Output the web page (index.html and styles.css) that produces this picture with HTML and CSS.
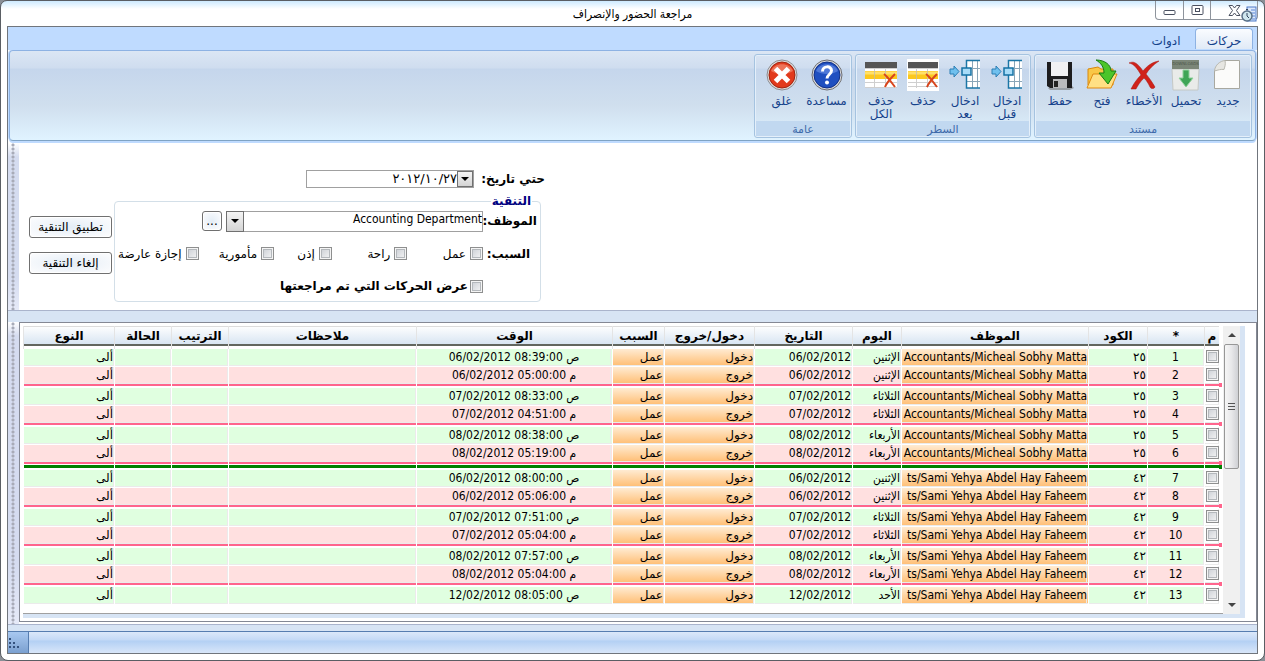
FILE: index.html
```html
<!DOCTYPE html>
<html lang="ar" dir="rtl">
<head>
<meta charset="utf-8">
<title>مراجعة الحضور والإنصراف</title>
<link rel="stylesheet" href="styles.css">
</head>
<body>
<div class="window">
  <header class="titlebar">
    <h1 class="title">مراجعة الحضور والإنصراف</h1>
    <div class="controls">
      <button class="ctl ctl-close" aria-label="إغلاق"><svg width="13" height="11" viewBox="0 0 13 11"><path d="M1 .5h3.500l2 2.500 2-2.500H12L8.500 5.500l3.500 5H8.500l-2-2.500-2 2.500H1l3.500-5z" fill="#fff" stroke="#4a5060"/></svg></button>
      <button class="ctl" aria-label="تكبير"><svg width="13" height="11" viewBox="0 0 13 11"><rect x="1" y=".5" width="11" height="9" rx="1" fill="#fff" stroke="#4a5060"/><rect x="4.500" y="3.500" width="4" height="3" fill="#fff" stroke="#4a5060"/></svg></button>
      <button class="ctl" aria-label="تصغير"><svg width="13" height="11" viewBox="0 0 13 11"><rect x="1" y="5.500" width="11" height="4" rx="1" fill="#fff" stroke="#4a5060"/></svg></button>
    </div>
    <svg class="app-icon" width="16" height="17" viewBox="0 0 16 17"><rect x="6" y="1" width="9" height="14" fill="#dce8fa" stroke="#4a78c8"/><path d="M10 4h4M10 7h4M11 10h3M11 13h3" stroke="#5a88d8"/><circle cx="6" cy="10" r="5" fill="#cfe6ee" stroke="#5a7086" stroke-width="1.500"/><path d="M6 7v3l2 2M5 3.500h2" stroke="#30445c" fill="none"/></svg>
  </header>

  <main class="frame">
    <nav class="tabs">
      <button class="tab active">حركات</button>
      <button class="tab">ادوات</button>
    </nav>
    <div class="ribbon">
      <section class="group">
        <div class="tools">
          <button class="tool"><svg width="32" height="32" viewBox="0 0 32 32"><path d="M13 1.500h14.500v28h-25V12z" fill="#fbfbfa" stroke="#a8a8a0"/><path d="M13 1.500c1 4-.5 7-1 9-3-.5-6 .5-9.500 1.500C3 6 8 2 13 1.500z" fill="#e6e6e2" stroke="#b8b8b0"/></svg><span>جديد</span></button>
          <button class="tool"><svg width="32" height="32" viewBox="0 0 32 32"><path d="M2 10h27l-1 21H3z" fill="#e9ebe9" stroke="#c4c8c4"/><path d="M2 1h27v9H2z" fill="#7b8678"/><text x="15.500" y="6" text-anchor="middle" font-size="4" fill="#4c564a">DOWNLOADS</text><path d="M13 11h6v8h4l-7 9-7-9h4z" fill="#3fa556" stroke="#8fd09b"/></svg><span>تحميل</span></button>
          <button class="tool"><svg width="32" height="32" viewBox="0 0 32 32"><path d="M1 4c4-2 8-1 14 8 4-5 9-9 16-10-6 4-10 8-13 13 4 5 6 8 9 13-1 2-4 2-5 0-2-4-3-6-6-9-4 4-6 7-8 11H3c3-6 6-10 10-14C9 9 6 5 1 4z" fill="#d0221a" stroke="#a8160e" stroke-width=".5"/></svg><span>الأخطاء</span></button>
          <button class="tool"><svg width="32" height="32" viewBox="0 0 32 32"><path d="M2 10l10-2 3 2h12v16H2z" fill="#f9c746" stroke="#d8880c"/><path d="M1 29l6-14h24l-6 14z" fill="#ffe084" stroke="#e08a10"/><path d="M10 1c9 0 15 5 15 11h5l-8 13-9-11h5c0-6-3-10-8-13z" fill="#4cc52a" stroke="#187c12"/></svg><span>فتح</span></button>
          <button class="tool"><svg width="32" height="32" viewBox="0 0 32 32"><path d="M27 26l3 3-4 2H6l-2-2z" fill="#777" opacity=".6"/><path d="M3 3h25v26H6l-3-2z" fill="#1d1d1f"/><path d="M7 3h17v14H7z" fill="#f1f1f3"/><path d="M9 20h14v9H9z" fill="#b9babd"/><path d="M10 22h4v6h-4z" fill="#222"/></svg><span>حفظ</span></button>
        </div>
        <h2 class="group-name">مستند</h2>
      </section>
      <section class="group">
        <div class="tools">
          <button class="tool"><svg width="32" height="32" viewBox="0 0 32 32"><path d="M17 1h14v28H17z" fill="#fff"/><path d="M23.500 1v28M17 9.500h14M17 22.500h14M28.500 1v28" fill="none" stroke="#8aa6b8"/><path d="M31 1.500H17.500V29H31" fill="none" stroke="#1b76a6" stroke-width="1.500"/><rect x="13" y="9" width="9" height="7" fill="#a8dcf8" stroke="#1572a4" stroke-width="1.500"/><path d="M1 10h4V7l5 5.500L5 18v-3H1z" fill="#6fc0ee" stroke="#2c7fb4"/></svg><span>ادخال<br>قبل</span></button>
          <button class="tool"><svg width="32" height="32" viewBox="0 0 32 32"><path d="M17 1h14v28H17z" fill="#fff"/><path d="M23.500 1v28M17 9.500h14M17 22.500h14M28.500 1v28" fill="none" stroke="#8aa6b8"/><path d="M31 1.500H17.500V29H31" fill="none" stroke="#1b76a6" stroke-width="1.500"/><rect x="13" y="9" width="9" height="7" fill="#a8dcf8" stroke="#1572a4" stroke-width="1.500"/><path d="M1 10h4V7l5 5.500L5 18v-3H1z" fill="#6fc0ee" stroke="#2c7fb4"/></svg><span>ادخال<br>بعد</span></button>
          <button class="tool"><svg width="32" height="32" viewBox="0 0 32 32"><path d="M0 0h32v32H0z" fill="#fff"/><path d="M1 3h30v6H1z" fill="#555"/><path d="M1 12h30v8H1z" fill="#fcc81e"/><path d="M1 12.500h30v3H1z" fill="#ffe06a"/><path d="M1 23.500h30M1 27.500h30M9.500 9v20M20.500 9v20M1 9.500h30" stroke="#bbb" opacity=".7"/><path d="M19 15c4 3 7 8 11 13M30 15c-4 4-8 8-10 13" fill="none" stroke="#d8451c" stroke-width="2"/></svg><span>حذف</span></button>
          <button class="tool"><svg width="32" height="32" viewBox="0 0 32 32"><path d="M0 3h32v26H0z" fill="#fff"/><path d="M0 3h32v6H0z" fill="#555"/><path d="M0 12h32v8H0z" fill="#fcc81e"/><path d="M0 12.500h32v3H0z" fill="#ffe06a"/><path d="M0 23.500h32M0 28.500h32M9.500 9v20M20.500 9v20M0 9.500h32" stroke="#bbb" opacity=".7"/><path d="M19 15c4 3 7 8 11 13M30 15c-4 4-8 8-10 13" fill="none" stroke="#d8451c" stroke-width="2"/></svg><span>حذف<br>الكل</span></button>
        </div>
        <h2 class="group-name">السطر</h2>
      </section>
      <section class="group">
        <div class="tools">
          <button class="tool wide"><svg width="32" height="32" viewBox="0 0 32 32"><circle cx="16" cy="16" r="15" fill="#ddd" stroke="#6c6c70"/><circle cx="16" cy="16" r="13" fill="#1f4fc0" stroke="#102f86"/><path d="M5 12C8 3 24 3 27 12c-6 4-16 4-22 0z" fill="#6f95e8" opacity=".6"/><path d="M11.500 12.500c0-6 9-6 9-1 0 4-4.500 4-4.500 8" fill="none" stroke="#fff" stroke-width="3"/><circle cx="16" cy="23.500" r="2" fill="#fff"/></svg><span>مساعدة</span></button>
          <button class="tool wide"><svg width="32" height="32" viewBox="0 0 32 32"><circle cx="16" cy="16" r="15" fill="#ddd" stroke="#8c8c90"/><circle cx="16" cy="16" r="13" fill="#e23a1c" stroke="#a02410"/><path d="M5 12C8 3 24 3 27 12c-6 4-16 4-22 0z" fill="#f59a80" opacity=".6"/><path d="M9.500 9.500l13 13M22.500 9.500l-13 13" stroke="#fff" stroke-width="5"/></svg><span>غلق</span></button>
        </div>
        <h2 class="group-name">عامة</h2>
      </section>
    </div>

    <section class="dock">
      <form class="filter">
        <div class="fields">
          <div class="date-row">
            <label class="strong until" for="until">حتي تاريخ:</label>
            <div class="date-box">
              <button type="button" class="drop" aria-label="اختيار التاريخ"></button>
              <input id="until" type="text" value="٢٠١٢/١٠/٢٧" dir="ltr">
            </div>
          </div>
          <fieldset class="box">
            <legend>التنقية</legend>
            <div class="line">
              <label class="strong name" for="emp">الموظف:</label>
              <div class="combo">
                <select id="emp"><option>Accounting Department</option></select>
                <span class="drop"></span>
              </div>
              <button type="button" class="push dots">...</button>
            </div>
            <div class="line reasons">
              <span class="strong name inset">السبب:</span>
              <label class="check r1"><input type="checkbox">عمل</label>
              <label class="check r1"><input type="checkbox">راحة</label>
              <label class="check r2"><input type="checkbox">إذن</label>
              <label class="check r1"><input type="checkbox">مأمورية</label>
              <label class="check"><input type="checkbox">إجازة عارضة</label>
            </div>
            <div class="line">
              <span class="name"></span>
              <label class="check strong"><input type="checkbox">عرض الحركات التي تم مراجعتها</label>
            </div>
          </fieldset>
        </div>
        <div class="actions">
          <button type="button" class="push">تطبيق التنقية</button>
          <button type="button" class="push">إلغاء التنقية</button>
        </div>
      </form>
      <div class="grip"></div>
    </section>

    <div class="splitter"></div>

    <section class="dock grow">
      <div class="panel">
        <div class="view">
          <div class="scrollbar"><span class="arrow up"></span><span class="thumb"></span><span class="arrow down"></span></div>
          <div class="sheet">
          <table class="grid">
            <colgroup><col class="c-sel"><col class="c-num"><col class="c-code"><col class="c-emp"><col class="c-day"><col class="c-date"><col class="c-io"><col class="c-why"><col class="c-time"><col class="c-notes"><col class="c-num"><col class="c-num"><col class="c-type"></colgroup>
            <thead><tr><th>م</th><th>*</th><th>الكود</th><th>الموظف</th><th>اليوم</th><th>التاريخ</th><th>دخول/خروج</th><th>السبب</th><th>الوقت</th><th>ملاحظات</th><th>الترتيب</th><th>الحالة</th><th>النوع</th></tr></thead>
            <tbody>
            <tr class="in"><td class="sel"><input type="checkbox" aria-label="1"></td><td class="mid">1</td><td class="wide-text">٢٥</td><td class="hot emp">Accountants/Micheal Sobhy Matta</td><td>الإثنين</td><td>06/02/2012</td><td class="hot wide-text">دخول</td><td class="hot wide-text">عمل</td><td class="mid time">06/02/2012 08:39:00 ص</td><td></td><td></td><td></td><td class="wide-text">ألى</td></tr>
            <tr class="out"><td class="sel"><input type="checkbox" aria-label="2"></td><td class="mid">2</td><td class="wide-text">٢٥</td><td class="hot emp">Accountants/Micheal Sobhy Matta</td><td>الإثنين</td><td>06/02/2012</td><td class="hot wide-text">خروج</td><td class="hot wide-text">عمل</td><td class="mid time">06/02/2012 05:00:00 م</td><td></td><td></td><td></td><td class="wide-text">ألى</td></tr>
            <tr class="in"><td class="sel"><input type="checkbox" aria-label="3"></td><td class="mid">3</td><td class="wide-text">٢٥</td><td class="hot emp">Accountants/Micheal Sobhy Matta</td><td>الثلاثاء</td><td>07/02/2012</td><td class="hot wide-text">دخول</td><td class="hot wide-text">عمل</td><td class="mid time">07/02/2012 08:33:00 ص</td><td></td><td></td><td></td><td class="wide-text">ألى</td></tr>
            <tr class="out"><td class="sel"><input type="checkbox" aria-label="4"></td><td class="mid">4</td><td class="wide-text">٢٥</td><td class="hot emp">Accountants/Micheal Sobhy Matta</td><td>الثلاثاء</td><td>07/02/2012</td><td class="hot wide-text">خروج</td><td class="hot wide-text">عمل</td><td class="mid time">07/02/2012 04:51:00 م</td><td></td><td></td><td></td><td class="wide-text">ألى</td></tr>
            <tr class="in"><td class="sel"><input type="checkbox" aria-label="5"></td><td class="mid">5</td><td class="wide-text">٢٥</td><td class="hot emp">Accountants/Micheal Sobhy Matta</td><td>الأربعاء</td><td>08/02/2012</td><td class="hot wide-text">دخول</td><td class="hot wide-text">عمل</td><td class="mid time">08/02/2012 08:38:00 ص</td><td></td><td></td><td></td><td class="wide-text">ألى</td></tr>
            <tr class="out last"><td class="sel"><input type="checkbox" aria-label="6"></td><td class="mid">6</td><td class="wide-text">٢٥</td><td class="hot emp">Accountants/Micheal Sobhy Matta</td><td>الأربعاء</td><td>08/02/2012</td><td class="hot wide-text">خروج</td><td class="hot wide-text">عمل</td><td class="mid time">08/02/2012 05:19:00 م</td><td></td><td></td><td></td><td class="wide-text">ألى</td></tr>
            <tr class="in"><td class="sel"><input type="checkbox" aria-label="7"></td><td class="mid">7</td><td class="wide-text">٤٢</td><td class="hot emp">ts/Sami Yehya Abdel Hay Faheem</td><td>الإثنين</td><td>06/02/2012</td><td class="hot wide-text">دخول</td><td class="hot wide-text">عمل</td><td class="mid time">06/02/2012 08:00:00 ص</td><td></td><td></td><td></td><td class="wide-text">ألى</td></tr>
            <tr class="out"><td class="sel"><input type="checkbox" aria-label="8"></td><td class="mid">8</td><td class="wide-text">٤٢</td><td class="hot emp">ts/Sami Yehya Abdel Hay Faheem</td><td>الإثنين</td><td>06/02/2012</td><td class="hot wide-text">خروج</td><td class="hot wide-text">عمل</td><td class="mid time">06/02/2012 05:06:00 م</td><td></td><td></td><td></td><td class="wide-text">ألى</td></tr>
            <tr class="in"><td class="sel"><input type="checkbox" aria-label="9"></td><td class="mid">9</td><td class="wide-text">٤٢</td><td class="hot emp">ts/Sami Yehya Abdel Hay Faheem</td><td>الثلاثاء</td><td>07/02/2012</td><td class="hot wide-text">دخول</td><td class="hot wide-text">عمل</td><td class="mid time">07/02/2012 07:51:00 ص</td><td></td><td></td><td></td><td class="wide-text">ألى</td></tr>
            <tr class="out"><td class="sel"><input type="checkbox" aria-label="10"></td><td class="mid">10</td><td class="wide-text">٤٢</td><td class="hot emp">ts/Sami Yehya Abdel Hay Faheem</td><td>الثلاثاء</td><td>07/02/2012</td><td class="hot wide-text">خروج</td><td class="hot wide-text">عمل</td><td class="mid time">07/02/2012 05:04:00 م</td><td></td><td></td><td></td><td class="wide-text">ألى</td></tr>
            <tr class="in"><td class="sel"><input type="checkbox" aria-label="11"></td><td class="mid">11</td><td class="wide-text">٤٢</td><td class="hot emp">ts/Sami Yehya Abdel Hay Faheem</td><td>الأربعاء</td><td>08/02/2012</td><td class="hot wide-text">دخول</td><td class="hot wide-text">عمل</td><td class="mid time">08/02/2012 07:57:00 ص</td><td></td><td></td><td></td><td class="wide-text">ألى</td></tr>
            <tr class="out"><td class="sel"><input type="checkbox" aria-label="12"></td><td class="mid">12</td><td class="wide-text">٤٢</td><td class="hot emp">ts/Sami Yehya Abdel Hay Faheem</td><td>الأربعاء</td><td>08/02/2012</td><td class="hot wide-text">خروج</td><td class="hot wide-text">عمل</td><td class="mid time">08/02/2012 05:04:00 م</td><td></td><td></td><td></td><td class="wide-text">ألى</td></tr>
            <tr class="in"><td class="sel"><input type="checkbox" aria-label="13"></td><td class="mid">13</td><td class="wide-text">٤٢</td><td class="hot emp">ts/Sami Yehya Abdel Hay Faheem</td><td>الأحد</td><td>12/02/2012</td><td class="hot wide-text">دخول</td><td class="hot wide-text">عمل</td><td class="mid time">12/02/2012 08:05:00 ص</td><td></td><td></td><td></td><td class="wide-text">ألى</td></tr>
            </tbody>
          </table>
          </div>
        </div>
      </div>
      <div class="grip"></div>
    </section>

    <div class="strip"></div>
    <footer class="status"><div class="status-main"></div><div class="sizer"><svg width="12" height="12" viewBox="0 0 12 12"><path d="M1 1h2v2H1zM1 5h2v2H1zM5 5h2v2H5zM1 9h2v2H1zM5 9h2v2H5zM9 9h2v2H9z" fill="#34527e"/></svg></div></footer>
  </main>
</div>
</body>
</html>
```
FILE: styles.css
```css
* { box-sizing: border-box; }

body {
  margin: 0;
  background: #8a8f96;
  font: 12px/14px "DejaVu Sans Condensed", "DejaVu Sans", sans-serif;
  color: #000;
}

button, input, select { font: inherit; color: inherit; margin: 0; padding: 0; }

.tabs, .ribbon, .check, .strong, .push, .wide-text, .date-box, legend, .grid th { font-family: "DejaVu Sans", sans-serif; }

.window {
  min-height: 100vh;
  display: flex;
  flex-direction: column;
  padding: 0 6px 6px;
  border: 1px solid #5a5e64;
  border-radius: 7px 7px 8px 8px;
  background: linear-gradient(#cdeaff, #fff 8px);
}

/* Title bar */
.titlebar { position: relative; height: 25px; }
.title { margin: 0; padding-top: 6px; text-align: center; font-size: 12px; line-height: 14px; font-weight: normal; }
.controls { position: absolute; right: 0; top: 0; display: flex; height: 19px; border: 1px solid #8e949c; border-top: 0; border-radius: 0 0 4px 4px; }
.ctl { width: 27px; border: 0; border-left: 1px solid #8e949c; background: none; display: grid; place-items: center; }
.ctl:last-child { border-left: 0; }
.ctl-close { width: 47px; }
.app-icon { position: absolute; right: 1px; top: 5px; }

.frame { flex: 1; display: flex; flex-direction: column; border: 1px solid #70757c; background: #fff; }

/* Ribbon */
.tabs { display: flex; height: 23px; padding: 1px 4px 0; background: #bfdbff; }
.tab { width: 58px; border: 0; background: none; color: #15428b; padding-top: 3px; }
.tab.active { border: 1px solid #8db2e3; border-bottom: 0; border-radius: 4px 4px 0 0; background: linear-gradient(#fafcff, #dfe9f6); }
.ribbon {
  display: flex;
  gap: 3px;
  height: 91px;
  margin: 0 1px;
  padding: 3px 3px 2px;
  border: 1px solid #8db2e3;
  border-bottom-color: #7fa3c4;
  border-radius: 4px;
  background: linear-gradient(#dbe6f4, #cfddef 17px, #c5d6ec 18px, #d0dfee 55px, #e0f3ff);
  box-shadow: 0 0 0 1px #bfdbff, 0 2px 0 #bfdbff;
}
.group { display: flex; flex-direction: column; border: 1px solid #a5c3e0; border-radius: 3px; box-shadow: inset 0 0 0 1px #e4effa; overflow: hidden; }
.tools { flex: 1; display: flex; padding: 4px 2px 0 4px; }
.tool { display: flex; flex-direction: column; align-items: center; gap: 4px; width: 42px; border: 0; background: none; color: #15428b; line-height: 13px; }
.tool.wide { width: 45px; }
.tool span { white-space: nowrap; }
.group-name { margin: 0 1px 1px; height: 15px; font-size: 11px; line-height: 17px; font-weight: normal; text-align: center; color: #3e6aaa; background: #c1d8f0; }

/* Docked areas with a gripper on the outer edge */
.dock { display: flex; margin-top: 2px; }
.grip {
  width: 11px;
  flex: none;
  background:
    radial-gradient(circle at 5px 2px, #a8abb8 1px, transparent 2px) 0 0 / 11px 4px,
    linear-gradient(#fff, #d5dcf0 14px, #d5dcf0 80%, #e6eaf8);
}
.splitter { height: 12px; border-top: 1px solid #aab4cc; background: #d7e4f4; }

/* Filter form */
.filter { flex: 1; display: flex; justify-content: flex-end; gap: 2px; height: 167px; padding: 27px 0 0 10px; }
.fields { width: 431px; }
.strong { font-weight: bold; }
.date-row { display: flex; align-items: center; gap: 8px; height: 18px; }
.until { width: 63px; white-space: nowrap; }
.date-box { display: flex; width: 168px; height: 18px; border: 1px solid #a0a0a0; font-size: 13px; }
.date-box input { flex: 1; min-width: 0; border: 0; text-align: right; background: none; }
.drop { width: 16px; flex: none; border: 1px solid #707070; background: linear-gradient(#f4f4f4, #d4d4d4); display: grid; place-items: center; }
.drop::after { content: ""; border: 4px solid transparent; border-top-color: #000; border-bottom: 0; }
.box { min-width: 0; margin: 6px 4px 0 0; padding: 1px 3px 3px; border: 1px solid #d3dfe8; border-radius: 4px; }
legend { padding: 0 1px; margin-inline-start: 5px; font-weight: bold; color: #000080; }
.line { display: flex; align-items: center; height: 24px; }
.name { width: 54px; flex: none; white-space: nowrap; }
.inset { padding-inline-start: 7px; }
.combo { position: relative; width: 257px; height: 21px; }
.combo select { appearance: none; width: 100%; height: 21px; border: 1px solid #a0a0a0; border-radius: 0; background: #fff; padding: 0 0 4px 18px; }
.combo .drop { position: absolute; left: 0; top: 0; width: 18px; height: 21px; pointer-events: none; }
.reasons { height: 41px; }
.check { display: flex; align-items: center; gap: 4px; white-space: nowrap; }
.check.strong { gap: 2px; }
.r1 { width: 76px; }
.r2 { width: 58px; }
input[type="checkbox"] {
  appearance: none;
  flex: none;
  width: 13px;
  height: 13px;
  border: 1px solid #8e8f8f;
  background: linear-gradient(135deg, #c8ccd2, #f8f8f8);
  box-shadow: inset 0 0 0 1px #f4f4f4, inset 0 0 0 2px #b4b8bc;
}
.push { height: 22px; border: 1px solid #707070; border-radius: 3px; background: radial-gradient(#e4edf6, #fdfdfe); box-shadow: inset 0 0 0 1px #fff; }
.dots { width: 20px; height: 20px; margin-inline-start: 4px; line-height: 16px; }
.actions { display: flex; flex-direction: column; gap: 14px; width: 83px; padding-top: 46px; }

/* Data grid */
.grow { flex: 1; margin: 0; }
.panel { flex: 1; display: flex; min-width: 0; padding: 3px 11px 3px 3px; border: 1px solid #848894; margin-bottom: 2px; }
.view { flex: 1; display: flex; min-width: 0; padding: 0 5px 4px 0; background: #d7e4f4; }
.sheet { flex: 1; min-width: 0; padding-right: 4px; border-bottom: 1px solid #a0a0a0; background: #fff; }
.scrollbar { width: 17px; flex: none; display: flex; flex-direction: column; align-items: center; background: #f0f0f0; }
.arrow { height: 18px; display: grid; place-items: center; }
.arrow::after { content: ""; border: 4px solid transparent; }
.up::after { border-bottom-color: #444; border-top: 0; }
.down::after { border-top-color: #444; border-bottom: 0; }
.thumb {
  width: 15px;
  height: 125px;
  border: 1px solid #979797;
  border-radius: 2px;
  background: repeating-linear-gradient(#555 0 1px, transparent 1px 3px) center / 7px 8px no-repeat, linear-gradient(90deg, #f6f6f6, #e8e8ea 50%, #cfd0d4);
}
.down { margin-top: auto; }

.grid { width: 100%; table-layout: fixed; border-collapse: separate; border-spacing: 0; }
.c-sel { width: 15px; }
.c-num { width: 57px; }
.c-code { width: 59px; }
.c-emp { width: 187px; }
.c-day { width: 49px; }
.c-date { width: 98px; }
.c-io { width: 90px; }
.c-why { width: 52px; }
.c-time { width: 196px; }
.c-type { width: 91px; }

.grid th {
  height: 23px;
  padding: 0 0 3px;
  border-left: 1px solid #e4e4e4;
  white-space: nowrap;
  background:
    linear-gradient(#62665f, #62665f) 0 18px / 100% 2px no-repeat,
    linear-gradient(#dcdcdc, #dcdcdc) 0 0 / 100% 1px no-repeat,
    linear-gradient(#fff, #d8e5f2) 0 0 / 100% 18px no-repeat;
}
.grid td {
  --rule: transparent;
  --group: transparent;
  height: 18px;
  padding: 0 1px 2px 0;
  line-height: 16px;
  text-align: right;
  vertical-align: top;
  white-space: nowrap;
  overflow: hidden;
  border-left: 1px solid #fff;
  background:
    linear-gradient(#ebebeb, #ebebeb) 100% 0 / 1px 17px no-repeat,
    linear-gradient(#ebebeb, #ebebeb) 0 16px / 100% 1px no-repeat,
    linear-gradient(var(--rule), var(--rule)) 0 17px / 100% 2px no-repeat,
    linear-gradient(var(--group), var(--group)) 0 20px / 100% 3px no-repeat,
    linear-gradient(var(--top), var(--end)) 0 0 / 100% 16px no-repeat;
}
.in td { --top: #e0ffe0; --end: #e0ffe0; }
.out td { --top: #ffe0e0; --end: #ffe0e0; --rule: #ff648c; height: 21px; padding-bottom: 5px; }
.last td { --group: #008000; height: 25px; padding-bottom: 9px; }
.grid td.hot { --top: #ffebd2; --end: #ffc078; }
.grid td.mid { text-align: center; }
.grid td.emp, .grid td.time { direction: ltr; }
.grid td.sel { --top: #fff; --end: #fff; position: relative; overflow: visible; padding-right: 0; }
.sel input { display: block; margin: 1px 0 0; }
.out .sel::after { content: ""; position: absolute; right: -3px; top: 16px; width: 3px; height: 4px; background: #ff648c; }
.last .sel::before { content: ""; position: absolute; right: -3px; top: 20px; width: 3px; height: 4px; background: #008000; }

/* Bottom bars */
.strip { height: 7px; border-top: 1px solid #aab4cc; background: #d7e4f4; }
.status { display: flex; height: 22px; border-top: 1px solid #567db0; }
.status-main { flex: 1; background: linear-gradient(#dbe8fa, #c3d9f6 8px, #b3d0f4 9px, #d8e6f9); }
.sizer { width: 21px; border-right: 1px solid #567db0; background: linear-gradient(#a8c8f0, #7ba0d0); display: flex; align-items: flex-end; justify-content: flex-end; padding-bottom: 4px; }
```
